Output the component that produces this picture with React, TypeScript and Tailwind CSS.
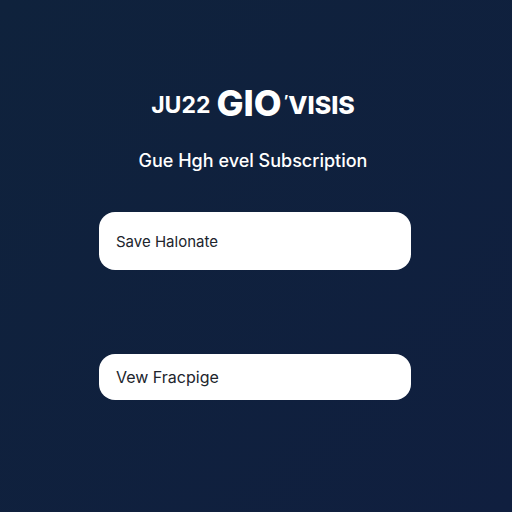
export default function App() {
  const actions = [
    { label: 'Save Halonate', className: 'pt-[18px] pb-4 text-[15px]' },
    { label: 'Vew Fracpige', className: 'py-[11px] text-base' }
  ]

  return (
    <main className="min-h-screen bg-gradient-to-br from-[#0f223c] to-[#101f3f] pt-[77px] pr-[26px] pb-28 pl-6 text-white font-[Inter,sans-serif]">
      <header className="pr-1 text-center">
        {/* Wordmark */}
        <h1 className="flex items-center justify-center gap-1.5 text-2xl leading-12 font-bold whitespace-nowrap">
          <span className="pt-1 text-[23px]">JU22</span>
          <span className="flex items-center">
            <span className="text-4xl leading-12 font-extrabold">GIO</span>
            <span className="self-start pl-0.5 text-sm leading-12 font-extrabold">’</span>
            <span className="pt-1 text-[25px] font-extrabold">VISIS</span>
          </span>
        </h1>
        <p className="mt-5 text-lg leading-6 font-medium">Gue Hgh evel Subscription</p>
      </header>

      {/* Actions */}
      <div className="mx-auto mt-[39px] flex max-w-[312px] flex-col gap-21">
        {actions.map((action) => (
          <button
            key={action.label}
            type="button"
            className={`w-full rounded-2xl bg-white px-[17px] text-left leading-6 text-[#20242c] ${action.className}`}
          >
            {action.label}
          </button>
        ))}
      </div>
    </main>
  )
}
